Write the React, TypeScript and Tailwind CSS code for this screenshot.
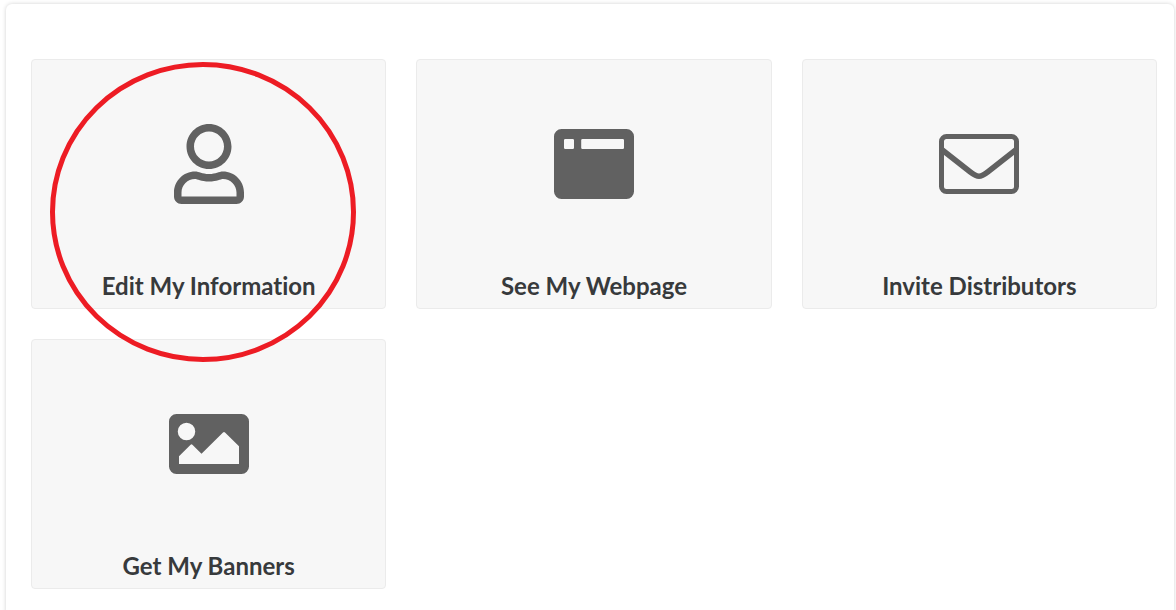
import type { ReactNode } from "react";
import { FaRegUser } from "react-icons/fa";

interface Tile {
  title: string;
  href: string;
  icon: ReactNode;
  highlighted?: boolean;
}

function WebpageIcon() {
  return (
    <svg viewBox="0 0 80 80" className="size-20" fill="currentColor" aria-hidden="true">
      <path
        fillRule="evenodd"
        d="M7.5 5h65a7.5 7.5 0 0 1 7.5 7.5v55a7.5 7.5 0 0 1-7.5 7.5h-65a7.5 7.5 0 0 1-7.5-7.5v-55a7.5 7.5 0 0 1 7.5-7.5zM11.3 15a1.3 1.3 0 0 0-1.3 1.3v7.4a1.3 1.3 0 0 0 1.3 1.3h7.4a1.3 1.3 0 0 0 1.3-1.3v-7.4a1.3 1.3 0 0 0-1.3-1.3zM28.5 15a1.3 1.3 0 0 0-1.3 1.3v7.4a1.3 1.3 0 0 0 1.3 1.3h40.2a1.3 1.3 0 0 0 1.3-1.3v-7.4a1.3 1.3 0 0 0-1.3-1.3z"
      />
    </svg>
  );
}

function EnvelopeIcon() {
  return (
    <svg viewBox="0 0 80 80" className="size-20" fill="none" stroke="currentColor" strokeWidth="5" aria-hidden="true">
      <rect x="2.5" y="12.5" width="75" height="55" rx="5" />
      <path d="M3 25.7L31 47.7C34 50 37 52.2 40 52.2S46 50 49 47.7L77 25.7" strokeWidth="5.6" />
    </svg>
  );
}

function BannerIcon() {
  return (
    <svg viewBox="0 0 80 80" className="size-20" fill="currentColor" aria-hidden="true">
      <path
        fillRule="evenodd"
        d="M7.5 10h65a7.5 7.5 0 0 1 7.5 7.5v45a7.5 7.5 0 0 1-7.5 7.5h-65a7.5 7.5 0 0 1-7.5-7.5v-45a7.5 7.5 0 0 1 7.5-7.5zM17.5 18.75a8.75 8.75 0 1 0 0 17.5a8.75 8.75 0 1 0 0-17.5zM10 60h60V42.3L56 28.4q-1-1-2 0L32.5 49.8L23.4 40.7q-.9-.9-1.8 0L10 52.3z"
      />
    </svg>
  );
}

const tiles: Tile[] = [
  {
    title: "Edit My Information",
    href: "#information",
    icon: <FaRegUser className="size-20" aria-hidden="true" />,
    highlighted: true,
  },
  { title: "See My Webpage", href: "#webpage", icon: <WebpageIcon /> },
  { title: "Invite Distributors", href: "#invite", icon: <EnvelopeIcon /> },
  { title: "Get My Banners", href: "#banners", icon: <BannerIcon /> },
];

export default function App() {
  return (
    <div className="min-h-screen bg-white pt-1 pl-1.5 pr-0.5 font-['Lato',sans-serif]">
      <main className="min-h-screen rounded-t-md bg-white pt-[55px] pr-[17px] pb-5 pl-[25px] shadow-[0_0_4px_rgba(0,0,0,0.18)]">
        <div className="grid grid-cols-1 gap-[30px] sm:grid-cols-2 md:grid-cols-3">
          {tiles.map((tile) => (
            <a
              key={tile.title}
              href={tile.href}
              className="relative flex h-[250px] flex-col items-center justify-between rounded border border-[#ebebeb] bg-[#f7f7f7] pt-16 text-[#616161]"
            >
              {tile.icon}
              <span className="pb-1 text-2xl leading-9 font-bold text-[#373a3c] [font-variant-ligatures:none]">
                {tile.title}
              </span>
              {tile.highlighted && (
                <svg
                  viewBox="0 0 306 300"
                  className="pointer-events-none absolute top-0.5 left-[18px] z-10 h-[300px] w-[306px]"
                  fill="none"
                  aria-hidden="true"
                >
                  <ellipse cx="153" cy="150" rx="150.5" ry="147.5" stroke="#ed1c24" strokeWidth="5" />
                </svg>
              )}
            </a>
          ))}
        </div>
      </main>
    </div>
  );
}
